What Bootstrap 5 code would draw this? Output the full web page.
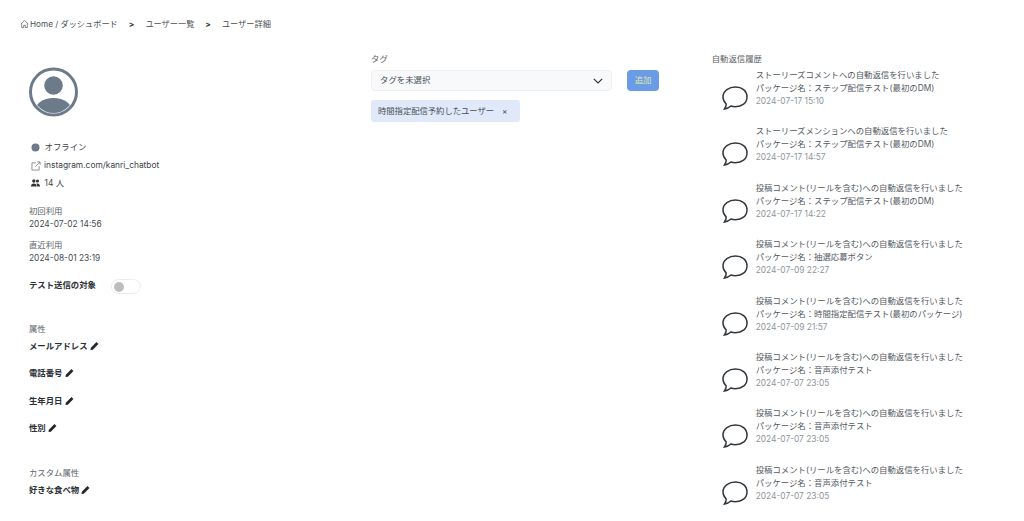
<!DOCTYPE html>
<html lang="ja"><head><meta charset="utf-8">
<link href="https://cdn.jsdelivr.net/npm/bootstrap@5.3.0/dist/css/bootstrap.min.css" rel="stylesheet">
<style>
html,body{height:521px;overflow:hidden}
body{font-family:Inter,"Noto Sans CJK JP",sans-serif;font-size:8.4px;line-height:13px;color:#444b52;background:#fff}
svg{display:block;flex:none}
.crumbs{padding:0 0 0 20px;height:48px;color:#4a4f55;font-size:8.2px}
.crumbs svg{margin-right:1px}
.crumbs b{color:#333;margin:0 11px;font-weight:700}
.side{padding-left:29px}
.side-mid{padding-left:29.7px}
.avatar{margin-top:19px;margin-bottom:22px}
.meta{height:17.7px;gap:3px;color:#3d4349}
.meta svg{margin-left:2px}
.lbl{color:#5d6368}
.spc-a{height:13px}
.spc-b{height:8px}
.testrow{height:27px;margin-top:14px}
.strong{font-weight:700;color:#2b3036}
.toggle{width:30px;height:15px;border:1px solid #e8edf3;border-radius:8px;margin:0 0 0 15px;padding:2px}
.toggle i{display:block;width:10px;height:10px;border-radius:50%;background:#bdbdbd}
.attr-head{margin-top:17px;height:17px}
.attr-head2{margin-top:18px;height:17px}
.attr{height:27.3px;gap:2px}
.attr svg{margin-top:1px}
.coltop{height:17px;margin-top:5px}
.sel{height:21px;width:241px;background:#f8f9fb;border:1px solid #eef0f4;border-radius:4px;padding:0 8px 0 8px;color:#4a5056}
.addbtn{width:32px;height:21px;border-radius:4px;background:#6b9be6;color:#dbe9a6;margin-left:15px;font-size:8.4px;line-height:21px;padding:0;border:0}
.chip{width:149px;height:22px;border-radius:3px;background:#dfe9fa;padding-left:7px;margin-top:9px;color:#4a5056;gap:8px;font-size:8.3px}
.histhead{height:16px;margin-top:5px}
.hist{height:56.4px;color:#54595f}
.bubble{margin:16px 8px 0 10px}
.when{color:#8e959d}
</style></head><body>
<div class="d-flex align-items-center crumbs">
<svg width="9" height="10" viewBox="0 0 16 16" fill="none" stroke="#444" stroke-width="1.1"><path d="M1.5 8 8 1.8 14.5 8M3 7v7.2h3.6v-4h2.800v4H13V7"/></svg>
<span>Home / ダッシュボード</span><b>&gt;</b><span>ユーザー一覧</span><b>&gt;</b><span>ユーザー詳細</span>
</div>
<div class="row g-0">
<div class="col-4 side">
<svg class="avatar" width="49" height="50" viewBox="0 0 49 50"><defs><clipPath id="ac"><circle cx="24.5" cy="25" r="21"/></clipPath></defs><circle cx="24.5" cy="25" r="23" fill="none" stroke="#6c7a89" stroke-width="3"/><circle cx="24.5" cy="18.500" r="9.3" fill="#6c7a89"/><ellipse cx="24.5" cy="45" rx="19" ry="14" fill="#6c7a89" clip-path="url(#ac)"/></svg>
<div class="d-flex align-items-center meta"><svg width="9" height="9"><circle cx="4.5" cy="4.5" r="4" fill="#6c7a89"/></svg><span>&#8201;オフライン</span></div>
<div class="d-flex align-items-center meta"><svg width="10" height="10" viewBox="0 0 16 16" fill="none" stroke="#666" stroke-width="1.1"><path d="M8 3H1.5v11.5H13V8M7 9l7.5-7.5M10 1.5h4.5V6"/></svg><span>instagram.com/kanri_chatbot</span></div>
<div class="d-flex align-items-center meta"><svg width="9" height="8" viewBox="0 0 16 14" fill="#333"><circle cx="5" cy="3.5" r="3"/><circle cx="11.5" cy="3.5" r="2.8"/><path d="M0 13c0-3.500 2-5 5-5s5 1.500 5 5zM11 13c0-2-.5-3.500-1.500-4.800 3-.8 6.500.5 6.500 4.800z"/></svg><span>&#8201;14 人</span></div>
<div class="spc-a"></div>
<div class="lbl">初回利用</div><div>2024-07-02 14:56</div>
<div class="spc-b"></div>
<div class="lbl">直近利用</div><div>2024-08-01 23:19</div>
<div class="d-flex testrow"><span class="strong">テスト送信の対象</span><div class="toggle"><i></i></div></div>
<div class="lbl attr-head">属性</div>
<div class="d-flex attr strong"><span>メールアドレス</span><svg width="9" height="10" viewBox="0 0 16 16" fill="#23272b"><path d="M11.500 1 15 4.500 5 14.500.8 15.300 1.500 11z"/></svg></div>
<div class="d-flex attr strong"><span>電話番号</span><svg width="9" height="10" viewBox="0 0 16 16" fill="#23272b"><path d="M11.500 1 15 4.500 5 14.500.8 15.300 1.500 11z"/></svg></div>
<div class="d-flex attr strong"><span>生年月日</span><svg width="9" height="10" viewBox="0 0 16 16" fill="#23272b"><path d="M11.500 1 15 4.500 5 14.500.8 15.300 1.500 11z"/></svg></div>
<div class="d-flex attr strong"><span>性別</span><svg width="9" height="10" viewBox="0 0 16 16" fill="#23272b"><path d="M11.500 1 15 4.500 5 14.500.8 15.300 1.500 11z"/></svg></div>
<div class="lbl attr-head2">カスタム属性</div>
<div class="d-flex attr strong"><span>好きな食べ物</span><svg width="9" height="10" viewBox="0 0 16 16" fill="#23272b"><path d="M11.500 1 15 4.500 5 14.500.8 15.300 1.500 11z"/></svg></div>
</div>
<div class="col-4 side-mid">
<div class="lbl coltop">タグ</div>
<div class="d-flex">
<div class="d-flex align-items-center justify-content-between sel"><span>タグを未選択</span><svg width="10" height="6" viewBox="0 0 10 6" fill="none" stroke="#333" stroke-width="1.2"><path d="M.8.8 5 5 9.200.8"/></svg></div>
<button class="btn addbtn" type="button">追加</button>
</div>
<div class="d-flex align-items-center chip"><span>時間指定配信予約したユーザー</span><span>×</span></div>
</div>
<div class="col-4 side">
<div class="lbl histhead">自動返信履歴</div>
<div class="d-flex hist"><svg class="bubble" width="26" height="26" viewBox="0 0 26 26" fill="none" stroke="#33383d" stroke-width="1.5"><path d="M13.500 2c6.300 0 11.500 3.700 11.500 10s-5.200 9.700-11.500 9.700c-1.600 0-3.200-.2-4.600-.7-1.400 1.300-3.500 2.500-6.400 3 1-1.500 1.800-3.200 1.700-5C2.200 17 1 14.700 1 12 1 5.700 7.200 2 13.500 2z"/></svg><div><div>ストーリーズコメントへの自動返信を行いました</div><div>パッケージ名：ステップ配信テスト(最初のDM)</div><div class="when">2024-07-17 15:10</div></div></div>
<div class="d-flex hist"><svg class="bubble" width="26" height="26" viewBox="0 0 26 26" fill="none" stroke="#33383d" stroke-width="1.5"><path d="M13.500 2c6.300 0 11.500 3.700 11.500 10s-5.200 9.700-11.500 9.700c-1.600 0-3.200-.2-4.600-.7-1.400 1.300-3.500 2.500-6.400 3 1-1.500 1.800-3.200 1.700-5C2.200 17 1 14.700 1 12 1 5.700 7.200 2 13.500 2z"/></svg><div><div>ストーリーズメンションへの自動返信を行いました</div><div>パッケージ名：ステップ配信テスト(最初のDM)</div><div class="when">2024-07-17 14:57</div></div></div>
<div class="d-flex hist"><svg class="bubble" width="26" height="26" viewBox="0 0 26 26" fill="none" stroke="#33383d" stroke-width="1.5"><path d="M13.500 2c6.300 0 11.500 3.700 11.500 10s-5.200 9.700-11.500 9.700c-1.600 0-3.200-.2-4.600-.7-1.400 1.300-3.500 2.500-6.400 3 1-1.500 1.800-3.200 1.700-5C2.200 17 1 14.700 1 12 1 5.700 7.200 2 13.500 2z"/></svg><div><div>投稿コメント(リールを含む)への自動返信を行いました</div><div>パッケージ名：ステップ配信テスト(最初のDM)</div><div class="when">2024-07-17 14:22</div></div></div>
<div class="d-flex hist"><svg class="bubble" width="26" height="26" viewBox="0 0 26 26" fill="none" stroke="#33383d" stroke-width="1.5"><path d="M13.500 2c6.300 0 11.500 3.700 11.500 10s-5.200 9.700-11.500 9.700c-1.600 0-3.200-.2-4.600-.7-1.400 1.300-3.500 2.500-6.400 3 1-1.500 1.800-3.200 1.700-5C2.200 17 1 14.700 1 12 1 5.700 7.200 2 13.500 2z"/></svg><div><div>投稿コメント(リールを含む)への自動返信を行いました</div><div>パッケージ名：抽選応募ボタン</div><div class="when">2024-07-09 22:27</div></div></div>
<div class="d-flex hist"><svg class="bubble" width="26" height="26" viewBox="0 0 26 26" fill="none" stroke="#33383d" stroke-width="1.5"><path d="M13.500 2c6.300 0 11.500 3.700 11.500 10s-5.200 9.700-11.500 9.700c-1.600 0-3.200-.2-4.600-.7-1.400 1.300-3.500 2.500-6.400 3 1-1.500 1.800-3.200 1.700-5C2.200 17 1 14.700 1 12 1 5.700 7.200 2 13.500 2z"/></svg><div><div>投稿コメント(リールを含む)への自動返信を行いました</div><div>パッケージ名：時間指定配信テスト(最初のパッケージ)</div><div class="when">2024-07-09 21:57</div></div></div>
<div class="d-flex hist"><svg class="bubble" width="26" height="26" viewBox="0 0 26 26" fill="none" stroke="#33383d" stroke-width="1.5"><path d="M13.500 2c6.300 0 11.500 3.700 11.500 10s-5.200 9.700-11.500 9.700c-1.600 0-3.200-.2-4.600-.7-1.400 1.300-3.500 2.500-6.400 3 1-1.500 1.800-3.200 1.700-5C2.200 17 1 14.700 1 12 1 5.700 7.200 2 13.500 2z"/></svg><div><div>投稿コメント(リールを含む)への自動返信を行いました</div><div>パッケージ名：音声添付テスト</div><div class="when">2024-07-07 23:05</div></div></div>
<div class="d-flex hist"><svg class="bubble" width="26" height="26" viewBox="0 0 26 26" fill="none" stroke="#33383d" stroke-width="1.5"><path d="M13.500 2c6.300 0 11.500 3.700 11.500 10s-5.200 9.700-11.500 9.700c-1.600 0-3.200-.2-4.600-.7-1.400 1.300-3.500 2.500-6.400 3 1-1.500 1.800-3.200 1.700-5C2.200 17 1 14.700 1 12 1 5.700 7.200 2 13.500 2z"/></svg><div><div>投稿コメント(リールを含む)への自動返信を行いました</div><div>パッケージ名：音声添付テスト</div><div class="when">2024-07-07 23:05</div></div></div>
<div class="d-flex hist"><svg class="bubble" width="26" height="26" viewBox="0 0 26 26" fill="none" stroke="#33383d" stroke-width="1.5"><path d="M13.500 2c6.300 0 11.500 3.700 11.500 10s-5.200 9.700-11.500 9.700c-1.600 0-3.200-.2-4.600-.7-1.400 1.300-3.500 2.500-6.400 3 1-1.500 1.800-3.200 1.700-5C2.200 17 1 14.700 1 12 1 5.700 7.200 2 13.500 2z"/></svg><div><div>投稿コメント(リールを含む)への自動返信を行いました</div><div>パッケージ名：音声添付テスト</div><div class="when">2024-07-07 23:05</div></div></div>
</div>
</div>
<script src="https://cdn.jsdelivr.net/npm/bootstrap@5.3.0/dist/js/bootstrap.bundle.min.js"></script>
</body></html>
